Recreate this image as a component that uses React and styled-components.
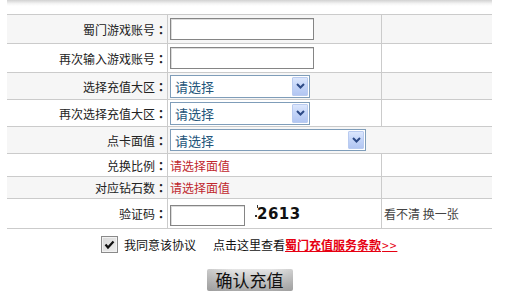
import React from 'react';
import styled, { createGlobalStyle } from 'styled-components';

const GlobalStyle = createGlobalStyle`
  html, body { margin: 0; padding: 0; background: #fff; }
  body {
    font-family: "Noto Sans CJK SC", "Liberation Sans", sans-serif;
    font-size: 12px;
    color: #222;
  }
`;

const Page = styled.div`
  width: 512px;
  height: 304px;
  overflow: hidden;
  background: #fff;
`;

const Panel = styled.div`
  margin-left: 7px;
  width: 485px;
`;

const TopShade = styled.div`
  height: 6px;
  margin-bottom: 8px;
  background: linear-gradient(#d2d2d2, #f4f4f4 60%, #fff);
`;

const FormTable = styled.div`
  border-top: 1px solid #cbcbcb;
`;

const Row = styled.div`
  display: grid;
  grid-template-columns: 161px 214px 110px;
  box-sizing: border-box;
  height: ${(p) => p.$h}px;
  border-bottom: 1px solid #cbcbcb;
  background: ${(p) => (p.$shaded ? '#f6f6f6' : '#fff')};
`;

const LabelCell = styled.div`
  display: flex;
  align-items: center;
  justify-content: flex-end;
  padding-right: 0;
  border-right: 1px solid #cbcbcb;
  color: #222;
  white-space: nowrap;
`;

const Colon = styled.span`
  font-family: "Noto Sans CJK TC", "Noto Sans CJK SC", sans-serif;
  font-weight: bold;
`;

const FieldCell = styled.div`
  display: flex;
  align-items: center;
  padding-left: 2px;
  grid-column: ${(p) => (p.$span ? 'span 2' : 'auto')};
  border-right: ${(p) => (p.$span ? 'none' : '1px solid #cbcbcb')};
`;

const ExtraCell = styled.div`
  display: flex;
  align-items: center;
  padding-left: 2px;
  color: #444;
  white-space: nowrap;
`;

const TextInput = styled.input`
  box-sizing: border-box;
  width: ${(p) => p.$w}px;
  height: ${(p) => p.$h}px;
  margin: ${(p) => p.$mt || 0}px 0 0 0;
  border: 1px solid #858585;
  box-shadow: inset 1px 1px 0 #dcdcdc;
  background: #fff;
  padding: 0 3px;
  font: inherit;
  outline: none;
`;

const SelectBox = styled.div`
  box-sizing: border-box;
  width: ${(p) => p.$w}px;
  height: ${(p) => p.$h}px;
  border: 1px solid #7f9db9;
  background: #fff;
  display: flex;
  align-items: center;
  justify-content: space-between;
  padding-left: 4px;
  color: #24557a;
  font-size: 13px;
`;

const SelectArrow = styled.span`
  box-sizing: border-box;
  width: 16px;
  height: calc(100% - 2px);
  margin-right: 1px;
  border: 1px solid #b9cbf0;
  border-radius: 1px;
  background: linear-gradient(#dce7fd, #c3d4f8 50%, #b2c6f2);
  display: flex;
  align-items: center;
  justify-content: center;
`;

const Notice = styled.span`
  color: #c0272d;
`;

const Captcha = styled.span`
  position: relative;
  display: inline-flex;
  align-items: center;
  margin-left: 12px;
  margin-top: 1px;
  height: 22px;
  font-family: "DejaVu Sans", sans-serif;
  font-weight: bold;
  font-size: 15px;
  color: #111;
  letter-spacing: 0.5px;
`;

const Noise = styled.i`
  position: absolute;
  left: ${(p) => p.$x}px;
  top: ${(p) => p.$y}px;
  width: ${(p) => p.$w || 2}px;
  height: ${(p) => p.$h || 2}px;
  background: #333;
`;

const AgreeRow = styled.div`
  display: flex;
  align-items: center;
  padding: 7px 0 0 94px;
  height: 17px;
  white-space: nowrap;
`;

const CheckBox = styled.span`
  box-sizing: border-box;
  width: 17px;
  height: 17px;
  border: 1px solid #8a8a8a;
  box-shadow: inset 0 0 0 1px #f2f2f2;
  background: linear-gradient(135deg, #d8d8d8, #eeeeee);
  display: flex;
  align-items: center;
  justify-content: center;
  margin-right: 6px;
`;

const AgreeText = styled.span`
  color: #111;
`;

const HintText = styled.span`
  color: #111;
  margin-left: 17px;
`;

const TermsLink = styled.a`
  color: #e60012;
  text-decoration: underline;
  font-weight: bold;
  cursor: pointer;
`;

const Arrows = styled.span`
  font-weight: normal;
  letter-spacing: 1px;
  padding-left: 1px;
`;

const ButtonRow = styled.div`
  display: flex;
  justify-content: center;
  margin-top: 16px;
`;

const ConfirmButton = styled.button`
  box-sizing: border-box;
  width: 86px;
  height: 22px;
  padding: 0;
  border: none;
  border-radius: 2px;
  background: linear-gradient(90deg, rgba(120,120,120,0.25), rgba(255,255,255,0) 30%, rgba(255,255,255,0) 75%, rgba(120,120,120,0.2)),
    linear-gradient(#e6e6e6, #c9c9c9 45%, #a9a9a9);
  font-family: "Noto Sans CJK SC", sans-serif;
  font-size: 17px;
  line-height: 22px;
  color: #111;
  letter-spacing: 0;
`;

const Chevron = () => (
  <svg width="9" height="6" viewBox="0 0 9 6">
    <path d="M1 1 L4.5 4.5 L8 1" fill="none" stroke="#2d4a86" strokeWidth="2" />
  </svg>
);

const Select = ({ w, h }) => (
  <SelectBox $w={w} $h={h}>
    <span>请选择</span>
    <SelectArrow>
      <Chevron />
    </SelectArrow>
  </SelectBox>
);

const Label = ({ children }) => (
  <LabelCell>
    {children}
    <Colon>：</Colon>
  </LabelCell>
);

export default function App() {
  return (
    <Page>
      <GlobalStyle />
      <Panel>
        <TopShade />
        <FormTable>
          <Row $h={29} $shaded>
            <Label>蜀门游戏账号</Label>
            <FieldCell><TextInput type="text" $w={144} $h={22} /></FieldCell>
            <ExtraCell />
          </Row>
          <Row $h={29}>
            <Label>再次输入游戏账号</Label>
            <FieldCell><TextInput type="text" $w={144} $h={22} /></FieldCell>
            <ExtraCell />
          </Row>
          <Row $h={27} $shaded>
            <Label>选择充值大区</Label>
            <FieldCell><Select w={140} h={23} /></FieldCell>
            <ExtraCell />
          </Row>
          <Row $h={27}>
            <Label>再次选择充值大区</Label>
            <FieldCell><Select w={140} h={23} /></FieldCell>
            <ExtraCell />
          </Row>
          <Row $h={27} $shaded>
            <Label>点卡面值</Label>
            <FieldCell $span><Select w={196} h={22} /></FieldCell>
          </Row>
          <Row $h={23}>
            <Label>兑换比例</Label>
            <FieldCell><Notice>请选择面值</Notice></FieldCell>
            <ExtraCell />
          </Row>
          <Row $h={22} $shaded>
            <Label>对应钻石数</Label>
            <FieldCell><Notice>请选择面值</Notice></FieldCell>
            <ExtraCell />
          </Row>
          <Row $h={30}>
            <Label>验证码</Label>
            <FieldCell>
              <TextInput type="text" $w={75} $h={21} $mt={3} />
              <Captcha>
                <Noise $x={-2} $y={12} />
                <Noise $x={0} $y={2} $w={1} $h={3} />
                2613
              </Captcha>
            </FieldCell>
            <ExtraCell>看不清 换一张</ExtraCell>
          </Row>
        </FormTable>
        <AgreeRow>
          <CheckBox>
            <svg width="11" height="10" viewBox="0 0 11 10">
              <path d="M1.5 4.5 L4 7.5 L9.5 1.5" fill="none" stroke="#111" strokeWidth="2.2" />
            </svg>
          </CheckBox>
          <AgreeText>我同意该协议</AgreeText>
          <HintText>点击这里查看</HintText>
          <TermsLink>蜀门充值服务条款<Arrows>&gt;&gt;</Arrows></TermsLink>
        </AgreeRow>
        <ButtonRow>
          <ConfirmButton type="button">确认充值</ConfirmButton>
        </ButtonRow>
      </Panel>
    </Page>
  );
}
